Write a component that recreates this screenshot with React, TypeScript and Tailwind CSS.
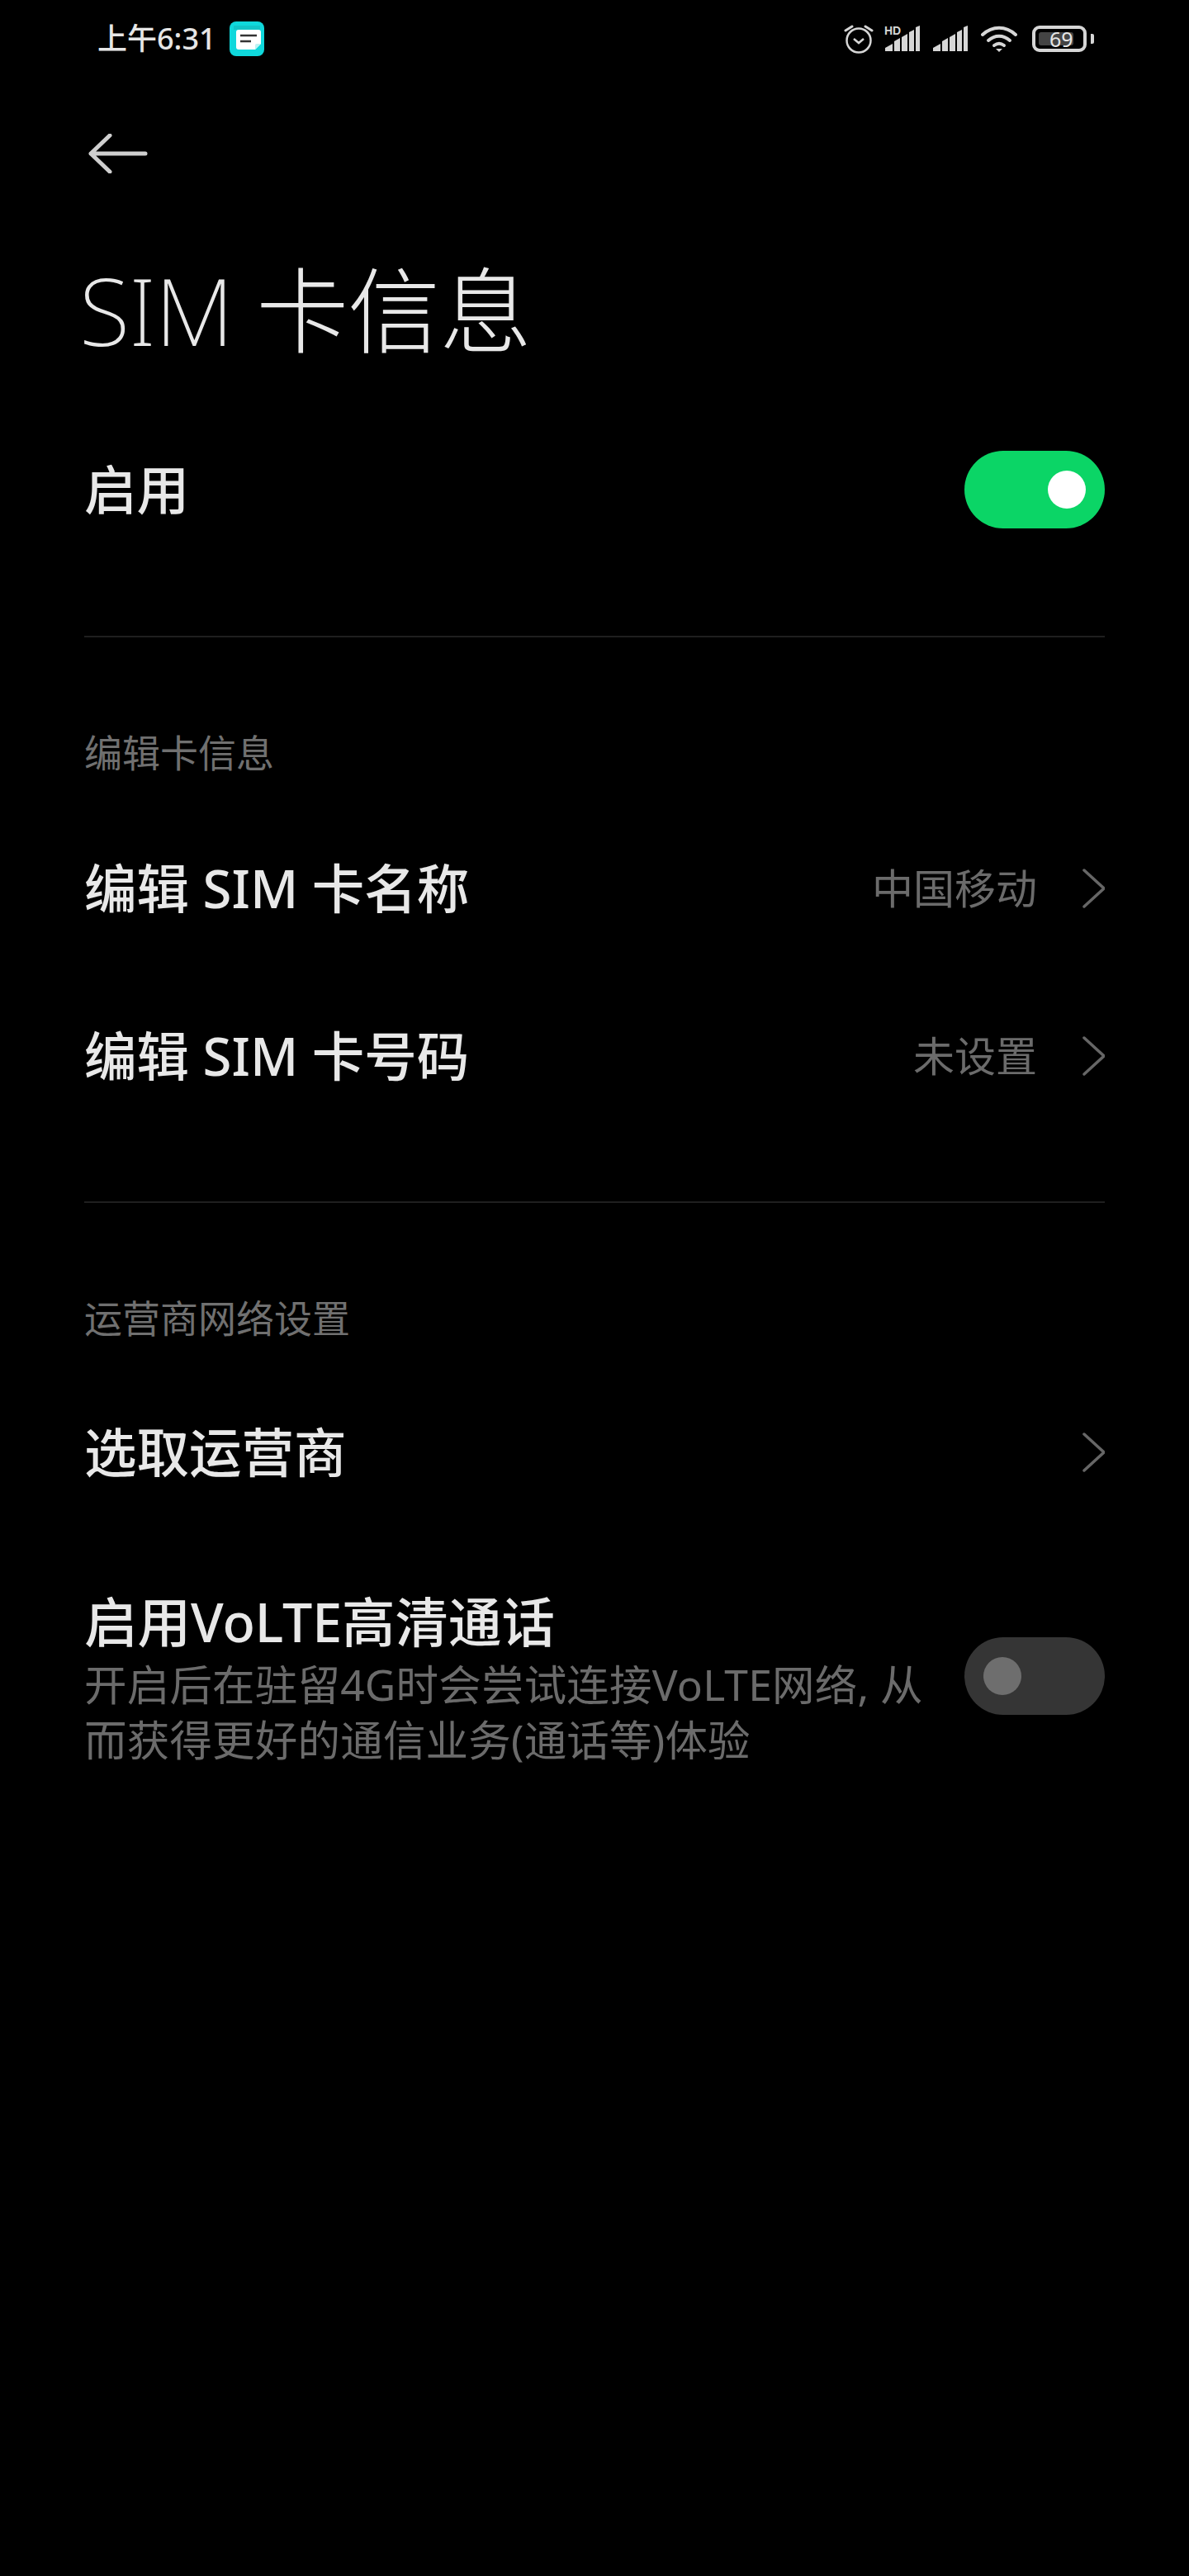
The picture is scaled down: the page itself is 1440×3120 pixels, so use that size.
import React from "react";

const cjk = "font-['Noto_Sans','Noto_Sans_CJK_SC',sans-serif]";

const Chevron = () => (
  <svg width="28" height="48" viewBox="0 0 28 48" fill="none" className="shrink-0">
    <path d="M3 2l24 22L3 46" stroke="#666" strokeWidth="3.5" strokeLinecap="round" strokeLinejoin="round" />
  </svg>
);

const Toggle = ({ on }: { on?: boolean }) =>
  on ? (
    <div className="flex h-[94px] w-[170px] shrink-0 items-center justify-end rounded-full bg-[#0bd566] pr-[23px]">
      <div className="h-[46px] w-[46px] rounded-full bg-white" />
    </div>
  ) : (
    <div className="flex h-[94px] w-[170px] shrink-0 items-center rounded-full bg-[#353535] pl-[23px]">
      <div className="h-[46px] w-[46px] rounded-full bg-[#6e6e6e]" />
    </div>
  );

const Signal = ({ hd }: { hd?: boolean }) => (
  <svg width="44" height="35" viewBox="0 -3 44 35" className="-mt-[3px] shrink-0">
    {hd && (
      <text x="0" y="11" fontSize="14" fontWeight="700" fill="#d6d6d6" fontFamily="Liberation Sans, sans-serif">
        HD
      </text>
    )}
    <path d="M1 31v-4l9-5v9z" fill="#d6d6d6" />
    <path d="M12 31V19l7-4v16z" fill="#d6d6d6" />
    <path d="M21 31V14l7-4v21z" fill="#d6d6d6" />
    <path d="M30 31V8l6-3v26z" fill="#d6d6d6" />
    <path d="M38 31V2l5-2v31z" fill="#d6d6d6" />
  </svg>
);

const Row = ({ title, value }: { title: string; value?: string }) => (
  <div className="flex h-[203px] items-center justify-between">
    <span className="text-[63.5px] leading-none font-medium text-[#e8e8e8]">{title}</span>
    <div className="flex items-center gap-[54px]">
      {value && <span className="text-[50px] leading-none text-[#6b6b6b]">{value}</span>}
      <Chevron />
    </div>
  </div>
);

export default function App() {
  return (
    <div className={`h-[3120px] w-[1440px] overflow-hidden bg-black ${cjk}`}>
      {/* status bar */}
      <div className="flex h-[94px] items-center justify-between pl-[118px] pr-[115px]">
        <div className="flex items-center gap-[16px]">
          <span className="text-[36px] leading-none font-medium text-[#e6e6e6]">上午6:31</span>
          <svg width="42" height="42" viewBox="0 0 42 42">
            <rect width="42" height="42" rx="8" fill="#0fd8dc" />
            <path d="M5 5h32v5H5z" fill="#12c4c8" />
            <path d="M8 13a3 3 0 013-3h24a3 3 0 013 3v14l-7 7H11a3 3 0 01-3-3z" fill="#fff" />
            <path d="M31 34v-5a2 2 0 012-2h5z" fill="#bdf3f4" />
            <path d="M13 17h20M13 24h13" stroke="#333" strokeWidth="2.5" />
          </svg>
        </div>
        <div className="flex items-center">
          <svg width="36" height="36" viewBox="0 0 36 36" fill="none" stroke="#d6d6d6" className="mr-[13px] shrink-0">
            <circle cx="18" cy="20" r="14.5" strokeWidth="2.5" />
            <path d="M12 18l6 5 6-5" strokeWidth="2.5" />
            <path d="M2 8l8-5M34 8l-8-5" strokeWidth="3" strokeLinecap="round" />
          </svg>
          <Signal hd />
          <div className="w-[14px]" />
          <Signal />
          <div className="w-[15px]" />
          <svg width="44" height="32" viewBox="0 0 44 32" fill="none" stroke="#d6d6d6" strokeWidth="4" className="shrink-0">
            <path d="M2 11c12-11 28-11 40 0" strokeLinecap="round" />
            <path d="M9 18c8-7 18-7 26 0" strokeLinecap="round" />
            <path d="M16 24c4-3 8-3 12 0" strokeLinecap="round" />
            <path d="M18 28h8l-4 4z" fill="#d6d6d6" stroke="none" />
          </svg>
          <div className="relative ml-[18px] mr-[5px] flex h-[32px] w-[66px] shrink-0 items-center rounded-[9px] border-4 border-[#d6d6d6] p-[4px]">
            <div className="h-full w-[42px] rounded-[3px] bg-[#444]" />
            <span className="absolute left-[17px] top-0 text-[25px] leading-[24px] text-[#e6e6e6]">69</span>
          </div>
          <div className="h-[12px] w-[4px] rounded-r-[2px] bg-[#d6d6d6]" />
        </div>
      </div>

      {/* back arrow */}
      <div className="flex h-[184px] items-center pl-[107px]">
        <svg width="72" height="48" viewBox="0 0 72 48" fill="none" stroke="#cfcfcf" strokeWidth="5" strokeLinecap="round" strokeLinejoin="round">
          <path d="M3 24h66M26 2L3 24l23 22" />
        </svg>
      </div>

      {/* title */}
      <div className="flex h-[196px] items-center pl-[96px]">
        <h1 className="text-[112px] leading-none font-extralight tracking-[-1px] text-[#e8e8e8]">SIM 卡信息</h1>
      </div>

      <div className="px-[102px]">
        <div className="mt-[59px] flex h-[120px] items-center justify-between">
          <span className="text-[63.5px] leading-none font-medium text-[#e8e8e8]">启用</span>
          <Toggle on />
        </div>
        <div className="mt-[117px] h-[2px] bg-[#1f1f1f]" />

        <div className="mt-[109px] flex h-[60px] items-center text-[46px] text-[#707070]">编辑卡信息</div>
        <div className="mt-[33px]">
          <Row title="编辑 SIM 卡名称" value="中国移动" />
          <Row title="编辑 SIM 卡号码" value="未设置" />
        </div>
        <div className="mt-[75px] h-[2px] bg-[#1f1f1f]" />

        <div className="mt-[109px] flex h-[60px] items-center text-[46px] text-[#707070]">运营商网络设置</div>
        <div className="mt-[31px]">
          <Row title="选取运营商" />
        </div>

        <div className="mt-[69px] flex items-start justify-between">
          <div className="w-[1040px]">
            <div className="text-[64.5px] leading-[70px] font-medium text-[#e8e8e8]">启用VoLTE高清通话</div>
            <p className="mt-[8px] text-[51.5px] leading-[67px] tracking-[0.2px] text-[#6b6b6b]">
              开启后在驻留4G时会尝试连接VoLTE网络, 从
              <br />
              而获得更好的通信业务(通话等)体验
            </p>
          </div>
          <div className="mt-[54px]">
            <Toggle />
          </div>
        </div>
      </div>
    </div>
  );
}
